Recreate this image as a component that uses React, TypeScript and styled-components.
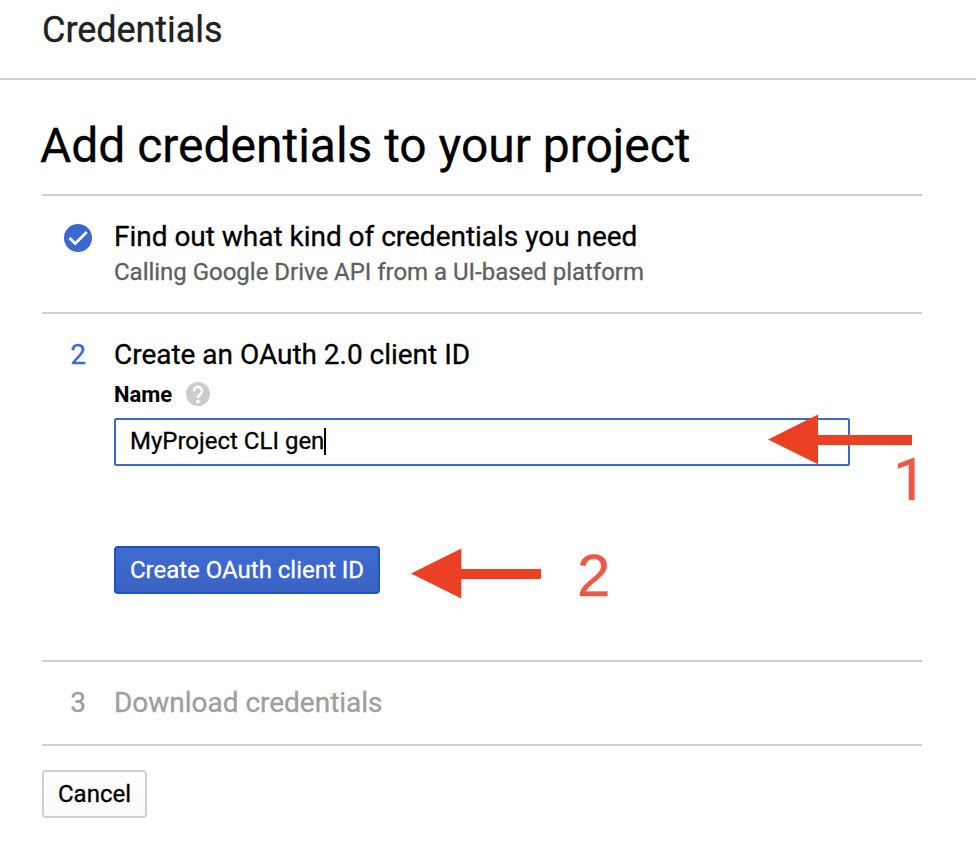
import React from "react";
import styled, { createGlobalStyle } from "styled-components";

const BLUE = "#3b68d0";
const RULE = "#d1d1d1";

const GlobalStyle = createGlobalStyle`
  *, *::before, *::after { box-sizing: border-box; }
  body {
    margin: 0;
    background: #fff;
    color: #000;
    font-family: Roboto, sans-serif;
    -webkit-font-smoothing: antialiased;
    -webkit-text-stroke: 0.3px currentColor;
  }
`;

const Page = styled.div`
  position: relative;
  width: 976px;
  height: 862px;
  overflow: hidden;
`;

const Header = styled.header`
  height: 80px;
  padding-left: 42px;
  border-bottom: 2px solid ${RULE};
  font-size: 36px;
  line-height: 60px;
  letter-spacing: -0.05px;
  color: #212121;
`;

const Main = styled.main`
  width: 880px;
  margin-left: 42px;
`;

const Title = styled.h1`
  height: 116px;
  margin: 0;
  padding-top: 38px;
  border-bottom: 2px solid ${RULE};
  font-size: 48px;
  font-weight: 400;
  line-height: 56px;
  letter-spacing: -0.03px;
  text-indent: -2px;
  white-space: nowrap;
`;

const Step = styled.section<{ $height: number }>`
  display: grid;
  grid-template-columns: 72px 736px;
  height: ${(p) => p.$height}px;
  padding-top: 22px;
  border-bottom: 2px solid ${RULE};
`;

const Marker = styled.div<{ $muted?: boolean }>`
  display: flex;
  justify-content: center;
  height: 36px;
  font-size: 28px;
  line-height: 38px;
  color: ${(p) => (p.$muted ? "#9e9e9e" : BLUE)};
`;

const CheckIcon = styled.svg`
  margin-top: 6px;
`;

const StepTitle = styled.h2<{ $muted?: boolean }>`
  height: 36px;
  margin: 0;
  font-size: 28px;
  font-weight: 400;
  line-height: 38px;
  letter-spacing: -0.02px;
  white-space: nowrap;
  color: ${(p) => (p.$muted ? "#9e9e9e" : "#000")};
`;

const StepNote = styled.p`
  margin: 0;
  font-size: 24px;
  line-height: 36px;
  letter-spacing: -0.02px;
  color: #5f5f5f;
`;

const FieldLabel = styled.label`
  display: flex;
  align-items: center;
  gap: 14px;
  height: 44px;
  font-size: 22px;
  font-weight: 700;
  -webkit-text-stroke-width: 0;
`;

const Field = styled.div`
  display: flex;
  align-items: center;
  height: 48px;
  margin-top: 2px;
  padding: 0 14px 2px;
  border: 2px solid ${BLUE};
  border-radius: 2px;
  font-size: 24px;
`;

const Caret = styled.span`
  width: 2px;
  height: 27px;
  background: #000;
`;

const Button = styled.button<{ $primary?: boolean }>`
  display: block;
  width: ${(p) => (p.$primary ? 266 : 105)}px;
  height: 48px;
  margin-top: ${(p) => (p.$primary ? 80 : 24)}px;
  padding: 0;
  border: 2px solid ${(p) => (p.$primary ? "#1c55c3" : RULE)};
  border-radius: 4px;
  background: ${(p) =>
    p.$primary
      ? "linear-gradient(#3e6ad1, #3a63c2)"
      : "linear-gradient(#fff, #fafafa)"};
  color: ${(p) => (p.$primary ? "#fff" : "#000")};
  font: 400 24px/44px Roboto, sans-serif;
  -webkit-text-stroke: 0.3px ${(p) => (p.$primary ? "#fff" : "#000")};
  white-space: nowrap;
`;

const Arrow = styled.svg<{ $x: number; $y: number }>`
  position: absolute;
  left: ${(p) => p.$x}px;
  top: ${(p) => p.$y}px;
  fill: #ec4024;
`;

const Callout = styled.span<{ $x: number; $y: number; $font: string }>`
  position: absolute;
  left: ${(p) => p.$x}px;
  top: ${(p) => p.$y}px;
  font: 400 60px/60px ${(p) => p.$font}, sans-serif;
  color: #ee5848;
`;

export default function App() {
  return (
    <Page>
      <GlobalStyle />
      <Header>Credentials</Header>
      <Main>
        <Title>Add credentials to your project</Title>
        <Step $height={118}>
          <Marker>
            <CheckIcon width="28" height="28" viewBox="0 0 28 28">
              <circle cx="14" cy="14" r="14" fill={BLUE} />
              <path d="M5.5 14l5.7 5.5L22.8 8" fill="none" stroke="#fff" strokeWidth="2.7" />
            </CheckIcon>
          </Marker>
          <div>
            <StepTitle>Find out what kind of credentials you need</StepTitle>
            <StepNote>Calling Google Drive API from a UI-based platform</StepNote>
          </div>
        </Step>
        <Step $height={348}>
          <Marker>2</Marker>
          <div>
            <StepTitle>Create an OAuth 2.0 client ID</StepTitle>
            <FieldLabel>
              Name
              <svg width="24" height="24" viewBox="0 0 24 24">
                <circle cx="12" cy="12" r="12" fill="#ccc" />
                <path
                  d="M8 9.3a4 4 0 1 1 6.9 2.4c-1.3 1.3-2.9 2-2.9 4.3"
                  fill="none"
                  stroke="#fff"
                  strokeWidth="2.6"
                />
                <circle cx="12" cy="19.5" r="1.9" fill="#fff" />
              </svg>
            </FieldLabel>
            <Field>
              MyProject CLI gen
              <Caret />
            </Field>
            <Button $primary>Create OAuth client ID</Button>
          </div>
        </Step>
        <Step $height={84}>
          <Marker $muted>3</Marker>
          <StepTitle $muted>Download credentials</StepTitle>
        </Step>
        <Button>Cancel</Button>
      </Main>
      <Arrow $x={768} $y={414} width="145" height="51" viewBox="0 0 145 51">
        <path d="M0 25.5L50 .5V21H144V31H50V50.3z" />
      </Arrow>
      <Callout $x={893} $y={450} $font="Roboto">1</Callout>
      <Arrow $x={411} $y={548} width="131" height="51" viewBox="0 0 131 51">
        <path d="M0 25.5L50.3 .5V21H130V31H50.3V50.5z" />
      </Arrow>
      <Callout $x={577} $y={546} $font="Liberation Sans">2</Callout>
    </Page>
  );
}
